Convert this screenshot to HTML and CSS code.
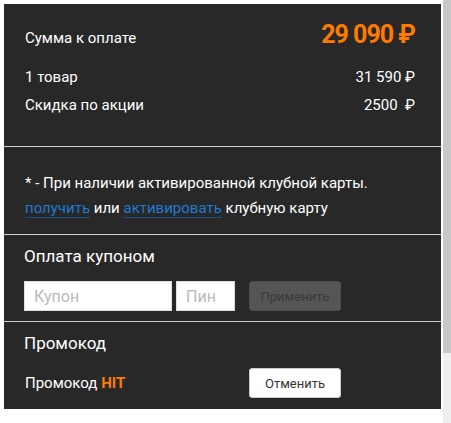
FILE: index.html
```html
<!DOCTYPE html>
<html lang="ru">
<head>
<meta charset="utf-8">
<link rel="stylesheet" href="styles.css">
</head>
<body>
<div class="page">
  <div class="panel">
    <section class="summary">
      <div class="row row-total">
        <span class="label">Сумма к оплате</span>
        <span class="total">29 090 ₽</span>
      </div>
      <div class="row">
        <span class="label">1 товар</span>
        <span class="value">31 590 ₽</span>
      </div>
      <div class="row">
        <span class="label">Скидка по акции</span>
        <span class="value">2500&nbsp; ₽</span>
      </div>
    </section>
    <section class="club">
      <p class="club-line">* - При наличии активированной клубной карты.</p>
      <p class="club-line"><a class="link" href="#">получить</a> или <a class="link" href="#">активировать</a> клубную карту</p>
    </section>
    <section class="coupon">
      <h2 class="title">Оплата купоном</h2>
      <div class="coupon-form">
        <input class="input input-coupon" placeholder="Купон">
        <input class="input input-pin" placeholder="Пин">
        <button class="btn btn-apply" type="button">Применить</button>
      </div>
    </section>
    <section class="promo">
      <h2 class="title">Промокод</h2>
      <div class="promo-row">
        <span class="promo-label">Промокод <b class="promo-code">HIT</b></span>
        <button class="btn btn-cancel" type="button">Отменить</button>
      </div>
    </section>
  </div>
  <div class="scrollbar"><div class="thumb"></div><div class="track"></div></div>
</div>
</body>
</html>
```
FILE: styles.css
```css
* { box-sizing: border-box; }
html, body { margin: 0; padding: 0; background: #fff; }
body { font-family: Roboto, "Open Sans", sans-serif; color: #fff; }
.page { display: flex; padding: 4px 0 0 4px; height: 423px; }
.panel { width: 437px; height: 405px; background: #282828; }
.scrollbar { margin-left: 2px; margin-top: -4px; width: 8px; display: flex; flex-direction: column; height: 423px; }
.thumb { height: 353px; background: #c8c8c8; }
.track { flex: 1; background: #efefef; }

.summary { padding: 16px 26px 0 21px; height: 143px; border-bottom: 1px solid #d0d0d0; }
.row { display: flex; justify-content: space-between; align-items: baseline; line-height: 28px; }
.row-total { line-height: 30px; margin-bottom: 10px; }
.label { font-size: 15px; }
.total { font-size: 25px; font-weight: 700; color: #ff7b00; letter-spacing: -1px; }
.value { font-size: 15px; }

.club { padding: 24px 20px 0 21px; height: 88px; border-bottom: 1px solid #d0d0d0; }
.club-line { margin: 0; font-size: 15px; line-height: 25px; }
.link { color: #1f7ad0; text-decoration: none; border-bottom: 1px solid #1c4f7c; }

.coupon { padding: 10px 20px 0 20px; height: 87px; border-bottom: 1px solid #d0d0d0; }
.title { margin: 0; font-size: 17px; font-weight: 400; line-height: 22px; }
.coupon-form { display: flex; margin-top: 14px; }
.input { height: 30px; border: 1px solid #ddd; background: #fff; font-family: inherit; font-size: 16px; padding: 0 9px; outline: none; }
.input::placeholder { color: #b9b9c0; }
.input-coupon { width: 148px; }
.input-pin { width: 59px; margin-left: 4px; }
.btn { height: 30px; width: 92px; border-radius: 3px; font-family: inherit; font-size: 13px; padding: 0; }
.btn-apply { margin-left: 14px; background: #555; border: 1px solid #4c4c4c; color: #3a3a3a; }

.promo { padding: 10px 20px 0 20px; }
.promo-row { display: flex; align-items: center; margin-top: 14px; }
.promo-label { font-size: 15px; width: 225px; padding-left: 1px; }
.promo-code { color: #ff7b00; font-weight: 700; }
.btn-cancel { background: #fff; border: 1px solid #ccc; color: #333; }
```
